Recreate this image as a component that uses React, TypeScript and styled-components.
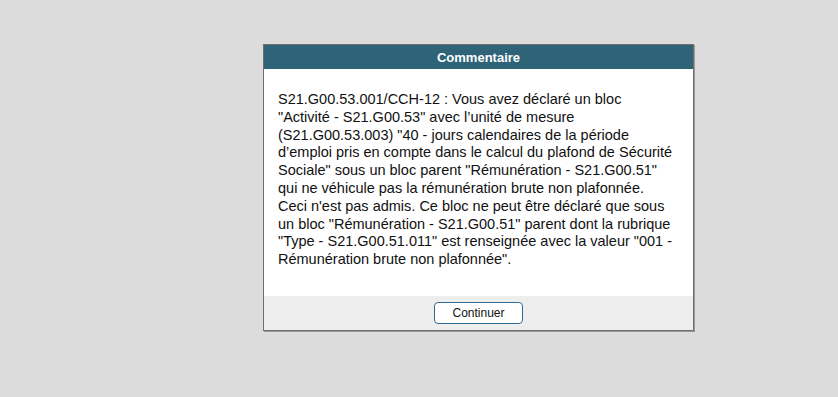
import * as React from 'react';
import styled, { createGlobalStyle } from 'styled-components';

const GlobalStyle = createGlobalStyle`
  html, body {
    margin: 0;
    padding: 0;
    background: #dcdcdc;
  }
`;

const Page = styled.div`
  width: 838px;
  height: 397px;
  background: #dcdcdc;
  padding: 44px 0 0 263px;
  box-sizing: border-box;
`;

const Dialog = styled.div`
  width: 429px;
  border: 1px solid #6e6e6e;
  background: #fff;
  box-shadow: 1px 1px 0 #9a9a9a;
  font-family: 'Liberation Sans', Arial, sans-serif;
`;

const Header = styled.div`
  height: 24px;
  background: #2e6378;
  color: #fff;
  font-weight: bold;
  font-size: 13px;
  display: flex;
  align-items: center;
  justify-content: center;
`;

const Body = styled.div`
  height: 227px;
  padding: 22px 13px 0 14px;
  font-size: 14.5px;
  line-height: 17.8px;
  color: #111;
  box-sizing: border-box;
`;

const Line = styled.div`
  white-space: nowrap;
`;

const Footer = styled.div`
  background: #eeeeee;
  height: 34px;
  display: flex;
  align-items: center;
  justify-content: center;
`;

const Button = styled.button`
  width: 89px;
  height: 22px;
  margin-top: -1px;
  background: #fff;
  border: 1px solid #2f6c95;
  border-radius: 4px;
  font-family: 'Liberation Sans', Arial, sans-serif;
  font-size: 12px;
  color: #111;
  padding: 0;
  cursor: pointer;
`;

// line breaks as rendered in the original dialog
const lines = [
  'S21.G00.53.001/CCH-12 : Vous avez déclaré un bloc',
  '"Activité - S21.G00.53" avec l\u2019unité de mesure',
  '(S21.G00.53.003) "40 - jours calendaires de la période',
  'd\u2019emploi pris en compte dans le calcul du plafond de Sécurité',
  'Sociale" sous un bloc parent "Rémunération - S21.G00.51"',
  'qui ne véhicule pas la rémunération brute non plafonnée.',
  'Ceci n\'est pas admis. Ce bloc ne peut être déclaré que sous',
  'un bloc "Rémunération - S21.G00.51" parent dont la rubrique',
  '"Type - S21.G00.51.011" est renseignée avec la valeur "001 -',
  'Rémunération brute non plafonnée".',
];

export default function App() {
  return (
    <>
      <GlobalStyle />
      <Page>
        <Dialog>
          <Header>Commentaire</Header>
          <Body>
            {lines.map((l, i) => (
              <Line key={i}>{l}</Line>
            ))}
          </Body>
          <Footer>
            <Button>Continuer</Button>
          </Footer>
        </Dialog>
      </Page>
    </>
  );
}
